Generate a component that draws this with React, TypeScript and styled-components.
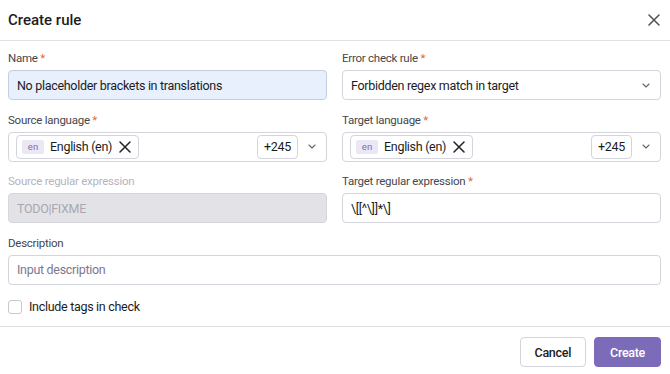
import React, { FC } from 'react';
import styled, { createGlobalStyle } from 'styled-components';

const GlobalStyle = createGlobalStyle`
  body {
    margin: 0;
    background: #ffffff;
    font-family: Roboto, 'Liberation Sans', sans-serif;
    color: #1c1c1e;
  }
`;

const CloseIcon: FC<{ size?: number; color?: string; width?: number }> = ({ size = 12, color = '#555', width = 1.6 }) => (
  <svg width={size} height={size} viewBox="0 0 12 12" fill="none">
    <path d="M1 1L11 11M11 1L1 11" stroke={color} strokeWidth={width} strokeLinecap="round" />
  </svg>
);

const Chevron = () => (
  <svg width="8" height="5" viewBox="0 0 8 5" fill="none">
    <path d="M1 1L4 4L7 1" stroke="#666" strokeWidth="1.1" strokeLinecap="round" strokeLinejoin="round" />
  </svg>
);

const LanguageSelect: FC = () => (
  <MultiBox>
    <Tag>
      <LangCode>en</LangCode>
      <TagText>English (en)</TagText>
      <CloseIcon size={12} color="#222" width={1.5} />
    </Tag>
    <Spacer />
    <Counter>+245</Counter>
    <ChevronWrap>
      <Chevron />
    </ChevronWrap>
  </MultiBox>
);

const App: FC = () => {
  return (
    <>
      <GlobalStyle />
      <Dialog>
        <Header>
          <Title>Create rule</Title>
          <CloseButton>
            <CloseIcon />
          </CloseButton>
        </Header>
        <Body>
          <Field>
            <Label>
              Name <Req>*</Req>
            </Label>
            <Input $autofill>No placeholder brackets in translations</Input>
          </Field>
          <Field>
            <Label>
              Error check rule <Req>*</Req>
            </Label>
            <Input>
              <span>Forbidden regex match in target</span>
              <Spacer />
              <Chevron />
            </Input>
          </Field>
          <Field>
            <Label>
              Source language <Req>*</Req>
            </Label>
            <LanguageSelect />
          </Field>
          <Field>
            <Label>
              Target language <Req>*</Req>
            </Label>
            <LanguageSelect />
          </Field>
          <Field>
            <Label $disabled>Source regular expression</Label>
            <Input $disabled>TODO|FIXME</Input>
          </Field>
          <Field>
            <Label>
              Target regular expression <Req>*</Req>
            </Label>
            <Input>{'\\[[^\\]]*\\]'}</Input>
          </Field>
          <Field $wide>
            <Label>Description</Label>
            <Input $placeholder>Input description</Input>
          </Field>
          <CheckRow>
            <CheckBox />
            <span>Include tags in check</span>
          </CheckRow>
        </Body>
        <Footer>
          <Button>Cancel</Button>
          <Button $primary>Create</Button>
        </Footer>
      </Dialog>
    </>
  );
};

const Dialog = styled.div`
  width: 670px;
  background: #ffffff;
  font-size: 12.5px;
  letter-spacing: -0.3px;
`;

const Header = styled.div`
  display: flex;
  align-items: center;
  justify-content: space-between;
  height: 40px;
  padding: 0 9px 0 8px;
  border-bottom: 1px solid #e2e2e6;
`;

const Title = styled.h1`
  margin: 0;
  font-size: 15px;
  font-weight: 500;
  letter-spacing: 0;
  color: #1c1c1e;
`;

const CloseButton = styled.div`
  display: flex;
  align-items: center;
  justify-content: center;
  width: 14px;
  height: 14px;
`;

const Body = styled.div`
  display: grid;
  grid-template-columns: 1fr 1fr;
  column-gap: 15px;
  row-gap: 11.5px;
  padding: 9px 9px 12px 8px;
  border-bottom: 1px solid #e2e2e6;
`;

const Field = styled.div<{ $wide?: boolean }>`
  display: flex;
  flex-direction: column;
  gap: 4px;
  grid-column: ${(p) => (p.$wide ? '1 / span 2' : 'auto')};
`;

const Label = styled.div<{ $disabled?: boolean }>`
  height: 16px;
  line-height: 16px;
  font-size: 11.5px;
  letter-spacing: -0.25px;
  color: ${(p) => (p.$disabled ? '#b4b4bc' : '#46464c')};
`;

const Req = styled.span`
  color: #e8623c;
`;

const Input = styled.div<{ $autofill?: boolean; $disabled?: boolean; $placeholder?: boolean }>`
  display: flex;
  align-items: center;
  box-sizing: border-box;
  height: 30px;
  padding: 0 10px 0 8px;
  border-radius: 4px;
  border: 1px solid ${(p) => (p.$autofill ? '#c5cde0' : p.$disabled ? '#d6d6dc' : '#d4d4dc')};
  background: ${(p) => (p.$autofill ? '#e8f0fe' : p.$disabled ? '#e3e3e7' : '#ffffff')};
  color: ${(p) => (p.$disabled ? '#a8a8b0' : p.$placeholder ? '#7c7890' : '#1c1c1e')};
`;

const MultiBox = styled.div`
  display: flex;
  align-items: center;
  box-sizing: border-box;
  height: 30px;
  padding: 0 10px 0 7px;
  border: 1px solid #d4d4dc;
  border-radius: 4px;
`;

const Tag = styled.div`
  display: flex;
  align-items: center;
  gap: 6px;
  box-sizing: border-box;
  height: 24px;
  padding: 0 7px 0 5px;
  border: 1px solid #d4d4dc;
  border-radius: 4px;
`;

const LangCode = styled.span`
  display: flex;
  align-items: center;
  justify-content: center;
  width: 22px;
  height: 14px;
  background: #ebe8f6;
  color: #7b6bb8;
  font-size: 9.5px;
  letter-spacing: 0;
  border-radius: 2px;
`;

const TagText = styled.span`
  margin-right: 1px;
`;

const Spacer = styled.div`
  flex: 1;
`;

const Counter = styled.div`
  display: flex;
  align-items: center;
  box-sizing: border-box;
  height: 24px;
  padding: 0 6px;
  border: 1px solid #d4d4dc;
  border-radius: 4px;
`;

const ChevronWrap = styled.div`
  display: flex;
  margin-left: 10px;
`;

const CheckRow = styled.label`
  grid-column: 1 / span 2;
  display: flex;
  align-items: center;
  gap: 7px;
  margin-top: 3px;
  color: #1c1c1e;
`;

const CheckBox = styled.span`
  box-sizing: border-box;
  width: 14px;
  height: 14px;
  border: 1px solid #c8c8d0;
  border-radius: 3px;
  background: #fff;
`;

const Footer = styled.div`
  display: flex;
  justify-content: flex-end;
  gap: 8px;
  padding: 10px 9px 8px 8px;
`;

const Button = styled.button<{ $primary?: boolean }>`
  box-sizing: border-box;
  height: 30px;
  padding: 0 ${(p) => (p.$primary ? '15px' : '14px')};
  border-radius: 4px;
  border: 1px solid ${(p) => (p.$primary ? '#7b6bb8' : '#d4d4dc')};
  background: ${(p) => (p.$primary ? '#7b6bb8' : '#ffffff')};
  color: ${(p) => (p.$primary ? '#ffffff' : '#1c1c1e')};
  font-family: Roboto, 'Liberation Sans', sans-serif;
  font-size: 12.5px;
  letter-spacing: -0.3px;
  font-weight: 500;
`;

export default App;
